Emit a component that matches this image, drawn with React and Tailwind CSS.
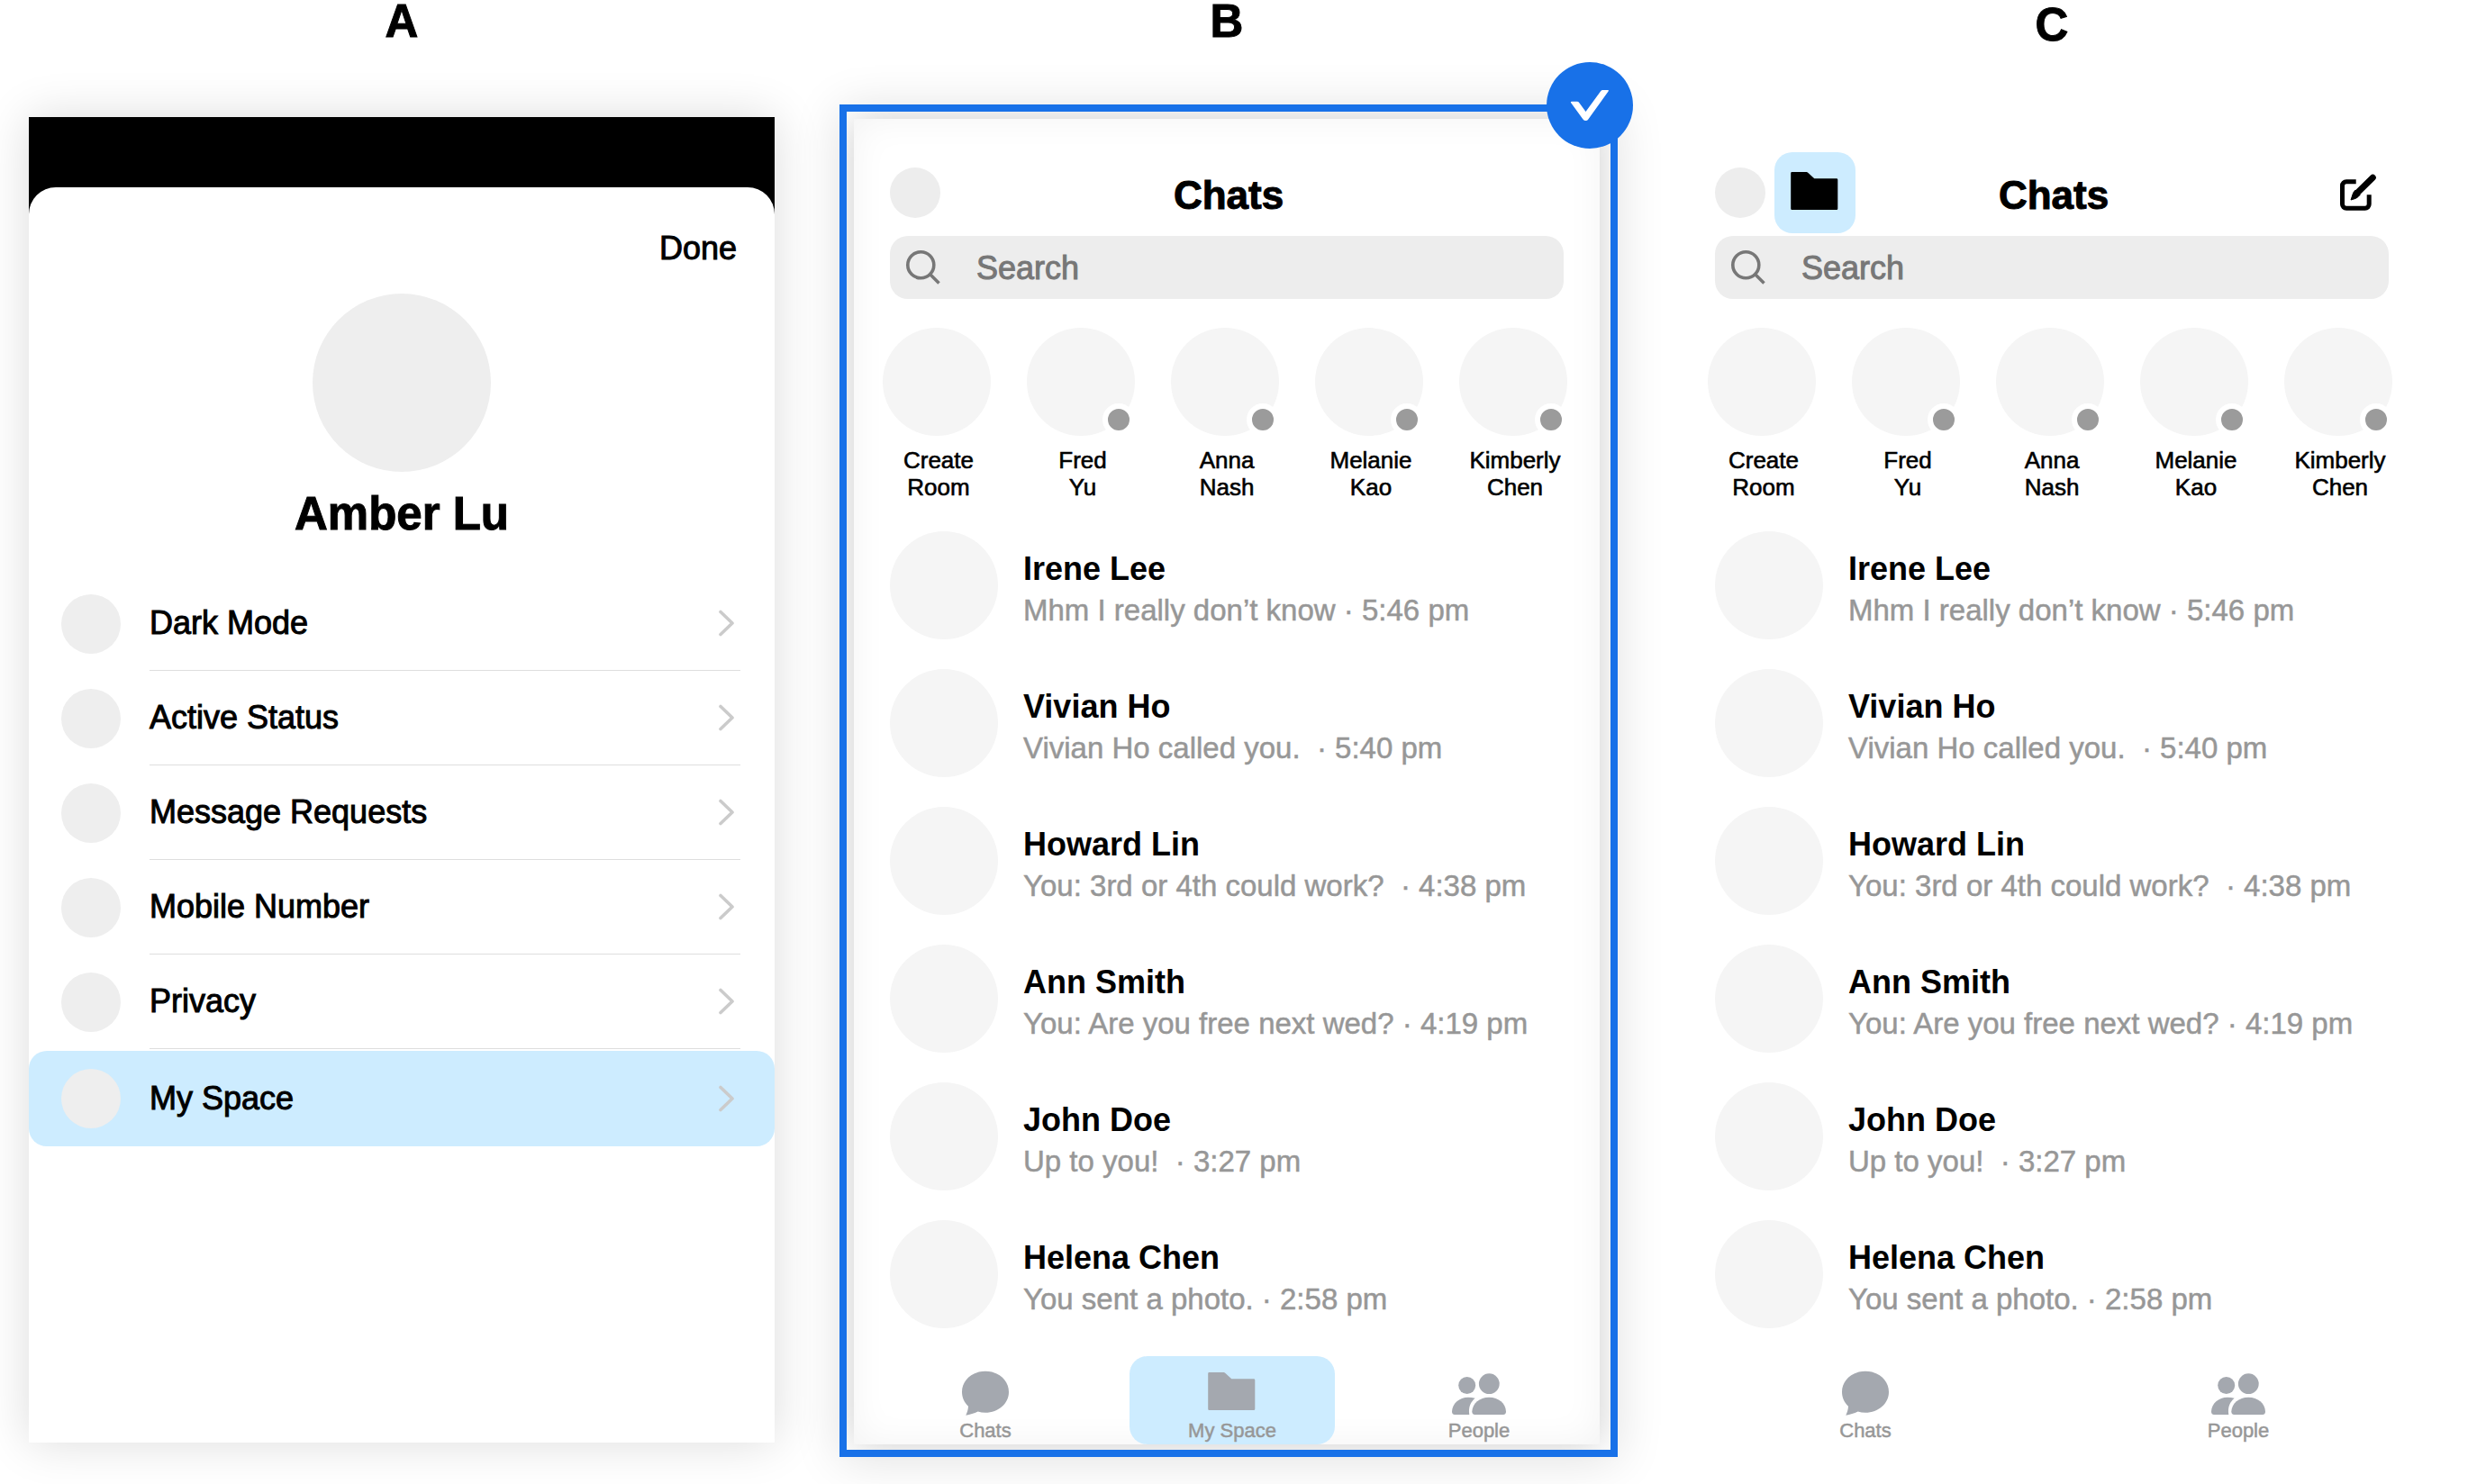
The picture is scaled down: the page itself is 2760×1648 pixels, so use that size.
import React from "react";

const settings = ["Dark Mode", "Active Status", "Message Requests", "Mobile Number", "Privacy"];

const stories = [
  { first: "Create", last: "Room", online: false },
  { first: "Fred", last: "Yu", online: true },
  { first: "Anna", last: "Nash", online: true },
  { first: "Melanie", last: "Kao", online: true },
  { first: "Kimberly", last: "Chen", online: true },
];

const chats = [
  { name: "Irene Lee", text: "Mhm I really don’t know ", time: "5:46 pm" },
  { name: "Vivian Ho", text: "Vivian Ho called you.  ", time: "5:40 pm" },
  { name: "Howard Lin", text: "You: 3rd or 4th could work?  ", time: "4:38 pm" },
  { name: "Ann Smith", text: "You: Are you free next wed? ", time: "4:19 pm" },
  { name: "John Doe", text: "Up to you!  ", time: "3:27 pm" },
  { name: "Helena Chen", text: "You sent a photo. ", time: "2:58 pm" },
];

function Chevron() {
  return (
    <svg className="h-[30px] w-5 shrink-0" viewBox="0 0 20 30" fill="none" stroke="#cbcbcb" strokeWidth="3.6" strokeLinecap="round" strokeLinejoin="round" aria-hidden="true">
      <path d="M4 2.5 17 15 4 27.5" />
    </svg>
  );
}

function SearchIcon() {
  return (
    <svg className="size-[38px] shrink-0" viewBox="0 0 38 38" fill="none" stroke="#777777" strokeWidth="3.6" aria-hidden="true">
      <circle cx="16.3" cy="16.3" r="14.5" />
      <path d="m26.500 26.500 10 10" />
    </svg>
  );
}

function ChatIcon() {
  return (
    <svg className="h-[52px] w-[60px]" viewBox="0 0 60 52" fill="#a4a8af" aria-hidden="true">
      <path d="M30 1.7C44.5 1.7 56 11.8 56 24.7S44.5 47.7 30 47.7C27 47.7 24.300 47.300 21.700 46.500C17.500 48.500 13 50 8.300 50.700C9.800 47.500 10.800 44.300 11 40.700C6.600 36.500 4 31 4 24.700C4 11.800 15.500 1.700 30 1.700Z" />
    </svg>
  );
}

function FolderIcon({ color }) {
  return (
    <svg className="h-[52px] w-[60px]" viewBox="0 0 60 52" fill={color} aria-hidden="true">
      <path d="M4.500 3H20.500Q21.500 3 22.200 3.700L29.300 10.300H54Q55.300 10.300 55.300 11.600V43.700Q55.300 45 54 45H4.500Q3.200 45 3.200 43.700V4.300Q3.200 3 4.500 3Z" />
    </svg>
  );
}

function PeopleIcon() {
  return (
    <svg className="h-[52px] w-[60px]" viewBox="0 0 60 52" fill="#a4a8af" aria-hidden="true">
      <circle cx="41.300" cy="15.700" r="11.400" />
      <circle cx="16.700" cy="17.500" r="9.500" />
      <path d="M22.300 46.500C22.800 37.500 30.500 30.700 41.200 30.700S59.600 37.500 60 46.500Q60 49.900 57 49.900H25.300Q22.300 49.900 22.300 46.500Z" />
      <path d="M25.700 31.700C20.800 35.800 18 41.500 19.300 49.900H3Q0 49.900 0 46.500C.5 37.500 8 30.700 18 30.700Q22 30.700 25.700 31.700Z" />
    </svg>
  );
}

function ComposeIcon() {
  return (
    <svg className="size-[42px]" viewBox="0 0 42 42" fill="none" stroke="#000000" aria-hidden="true">
      <path d="M18.700 8.800H8a4.500 4.500 0 0 0-4.500 4.500V33.700a4.500 4.500 0 0 0 4.500 4.500H28.700a4.500 4.500 0 0 0 4.500-4.500V23.300" strokeWidth="5" />
      <path d="M20.500 20.800 37.300 4.300" strokeWidth="7" strokeLinecap="round" />
      <path d="M13 29 15.500 21.500Q16.300 19.500 18 18.300L23 23.500Q21 26 18.500 27.300Z" fill="#000000" />
    </svg>
  );
}

function ColumnLabel({ children }) {
  return <h2 className="text-center text-[51px] leading-[48px] font-bold [-webkit-text-stroke:1px_black]">{children}</h2>;
}

function SettingsPanel() {
  return (
    <section aria-label="Settings" className="mt-[82px] flex flex-1 flex-col bg-black pt-[78px] shadow-[0_0_50px_rgba(0,0,0,0.14)]">
      <div className="flex flex-1 flex-col rounded-t-[30px] bg-white pt-[50px]">
        <button type="button" className="mr-[42px] self-end text-[36px] leading-9 [-webkit-text-stroke:1px_black]">
          Done
        </button>
        <div className="mt-8 size-[198px] self-center rounded-full bg-[#eeeeee]" />
        <h3 className="mt-4 text-center text-[51px] leading-[62px] font-bold [-webkit-text-stroke:1px_black]">Amber Lu</h3>
        <ul className="mt-[38px]">
          {settings.map((label) => (
            <li key={label}>
              <button type="button" className="flex h-[105px] w-full items-center gap-8 pr-[38px] pl-9 text-left">
                <span className="size-[66px] shrink-0 rounded-full bg-[#eeeeee]" />
                <span className="flex h-full flex-1 items-center justify-between border-b border-[#dedede] pr-1.5 text-[36px] [-webkit-text-stroke:1px_black]">
                  {label}
                  <Chevron />
                </span>
              </button>
            </li>
          ))}
          <li>
            <button type="button" className="mt-0.5 flex h-[106px] w-full items-center gap-8 rounded-[20px] bg-[#cdecff] pr-11 pl-9 text-left">
              <span className="size-[66px] shrink-0 rounded-full bg-[#eeeeee]" />
              <span className="flex-1 text-[36px] [-webkit-text-stroke:1px_black]">My Space</span>
              <Chevron />
            </button>
          </li>
        </ul>
      </div>
    </section>
  );
}

function Header({ withActions }) {
  return (
    <header className="mx-10 grid h-[92px] grid-cols-[1fr_auto_1fr] items-center">
      <div className="flex items-center gap-2.5">
        <span className="size-14 rounded-full bg-[#ededed]" />
        {withActions && (
          <button type="button" aria-label="My Space" className="flex size-[90px] items-center justify-center rounded-[20px] bg-[#cdecff]">
            <FolderIcon color="#000000" />
          </button>
        )}
      </div>
      <h3 className="pt-1.5 pl-1 text-[44px] leading-[50px] font-bold [-webkit-text-stroke:1px_black]">Chats</h3>
      {withActions && (
        <button type="button" aria-label="New message" className="mr-[13px] justify-self-end">
          <ComposeIcon />
        </button>
      )}
    </header>
  );
}

function Tab({ icon, label, active }) {
  return (
    <button
      type="button"
      className={
        active
          ? "flex h-[98px] w-[228px] flex-col items-center gap-0.5 rounded-[20px] bg-[#cdecff] pt-[15px]"
          : "flex h-[98px] w-[228px] flex-col items-center gap-0.5 pt-[15px]"
      }
    >
      {icon}
      <span className="text-[22px] leading-[28px] text-[#979797] [-webkit-text-stroke:0.5px_#979797]">{label}</span>
    </button>
  );
}

function ChatsScreen({ withActions, children }) {
  return (
    <>
      <Header withActions={withActions} />
      <label className="mx-10 mt-0.5 flex h-[70px] items-center gap-10 rounded-[20px] bg-[#ededed] pl-[18px]">
        <SearchIcon />
        <input
          type="search"
          aria-label="Search"
          placeholder="Search"
          className="min-w-0 flex-1 bg-transparent pt-0.5 text-[36px] leading-10 outline-none [-webkit-text-stroke:1px_#777777] placeholder:text-[#777777]"
        />
      </label>
      <ul className="mt-8 flex justify-between pr-9 pl-8">
        {stories.map((s) => (
          <li key={s.first} className="w-[120px]">
            <div className="relative size-[120px] rounded-full bg-[#f5f5f5]">
              {s.online && <span className="absolute right-0 bottom-0 size-9 rounded-full border-6 border-white bg-[#9b9b9b]" />}
            </div>
            <p className="mt-3 pl-1 text-center text-[26px] leading-[30px] [-webkit-text-stroke:0.6px_black]">
              {s.first}
              <br />
              {s.last}
            </p>
          </li>
        ))}
      </ul>
      <ul className="mt-[34px] flex flex-col gap-[33px] px-10">
        {chats.map((c) => (
          <li key={c.name} className="flex h-[120px] gap-7">
            <span className="size-[120px] shrink-0 rounded-full bg-[#f5f5f5]" />
            <div className="pt-[18px] whitespace-pre">
              <h4 className="text-[36px] leading-[48px] font-bold">{c.name}</h4>
              <p className="text-[33px] leading-[44px] text-[#979797] [-webkit-text-stroke:0.5px_#979797]">
                {c.text}· <time>{c.time}</time>
              </p>
            </div>
          </li>
        ))}
      </ul>
      <nav className="mt-[31px]">{children}</nav>
    </>
  );
}

export default function App() {
  return (
    <main className="grid grid-cols-3 gap-22 bg-white pr-17 pb-[30px] pl-8 font-['Liberation_Sans',Arial,sans-serif] text-black">
      <div className="flex flex-col pb-4">
        <ColumnLabel>A</ColumnLabel>
        <SettingsPanel />
      </div>

      <div className="flex flex-col">
        <ColumnLabel>B</ColumnLabel>
        <section
          aria-label="Chats with My Space tab"
          className="relative mt-[68px] -mr-5 -ml-4 border-8 border-[#1871e8] pt-2 pr-3 pb-1.5 pl-2 shadow-[0_4px_50px_rgba(0,0,0,0.12)]"
        >
          <div className="bg-white pt-9 shadow-[0_0_40px_rgba(0,0,0,0.2),inset_0_0_40px_rgba(0,0,0,0.05)] [clip-path:inset(-8px_-12px_-6px_-8px)]">
            <ChatsScreen>
              <div className="flex justify-between pr-5 pl-8">
                <Tab icon={<ChatIcon />} label="Chats" />
                <Tab icon={<FolderIcon color="#a4a8af" />} label="My Space" active />
                <Tab icon={<PeopleIcon />} label="People" />
              </div>
            </ChatsScreen>
          </div>
          <span role="img" aria-label="Selected" className="absolute -top-[55px] -right-[25px] size-24 rounded-full bg-[#1871e8]">
            <svg viewBox="0 0 96 96" fill="#ffffff" aria-hidden="true">
              <path d="M28 43.700H34Q35.300 43.700 36 44.700L43.500 55 60.300 32Q61 31 62.300 31H68Q69.500 31 68.700 32.200L46.300 63.500Q45.300 65 43.500 65T40.500 63.500L27.200 45.200Q26.300 43.700 28 43.700Z" />
            </svg>
          </span>
        </section>
      </div>

      <div className="flex flex-col pt-1">
        <ColumnLabel>C</ColumnLabel>
        <section aria-label="Chats with My Space shortcut" className="mt-20 pt-9">
          <ChatsScreen withActions>
            <div className="flex justify-around">
              <Tab icon={<ChatIcon />} label="Chats" />
              <Tab icon={<PeopleIcon />} label="People" />
            </div>
          </ChatsScreen>
        </section>
      </div>
    </main>
  );
}
